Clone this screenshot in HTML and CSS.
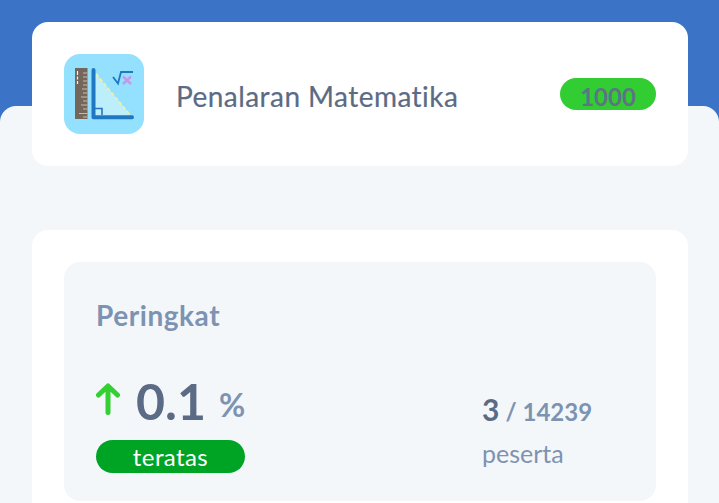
FILE: index.html
```html
<!DOCTYPE html>
<html lang="id">
<head>
<meta charset="utf-8">
<title>Penalaran Matematika</title>
<link rel="stylesheet" href="styles.css">
</head>
<body>
<div class="page">
  <header class="hero">
    <div class="card subject">
      <svg class="subject-icon" viewBox="0 0 80 80" width="80" height="80" aria-hidden="true">
        <rect width="80" height="80" rx="16" fill="#93e0ff"/>
        <rect x="11" y="14" width="12.500" height="51" fill="#75665c"/>
        <path d="M13.500 17v4M13.500 22.500v3M13.500 27v3" stroke="#f2efe9" stroke-width="1.200" fill="none"/>
        <path d="M19 19h4.500M19 23h4.500M19 27h4.500M19 31h4.500M18 35h5.500M19 39h4.500M17 43h6.500M19 47h4.500M17 51h6.500M19 55h4.500M15 59.500h8.500M19 63h4.500" stroke="#c9b9a3" stroke-width="1.200" fill="none"/>
        <path d="M31 19L66 60.500V62H31Z" fill="#bdeefb"/>
        <path d="M32 20L66 61" stroke="#e6f0b0" stroke-width="2" stroke-dasharray="4 2" fill="none"/>
        <path d="M29.500 16V63.300H68" stroke="#1f78c1" stroke-width="4" stroke-linecap="round" stroke-linejoin="round" fill="none"/>
        <path d="M31 54.500H38V61" stroke="#1f78c1" stroke-width="1.600" fill="none"/>
        <path d="M49 23l5 6.500 3-11.500H69" stroke="#1f78c1" stroke-width="1.800" fill="none"/>
        <path d="M59 22.500l8 7.500M67 22.500l-8 7.500" stroke="#c996e8" stroke-width="2.400" fill="none"/>
      </svg>
      <h1 class="subject-name">Penalaran Matematika</h1>
      <span class="score">1000</span>
    </div>
  </header>
  <main class="panel">
    <section class="card rank-card">
      <div class="rank">
        <h2 class="rank-title">Peringkat</h2>
        <div class="rank-body">
          <div class="rank-main">
            <div class="percent">
              <svg class="arrow" viewBox="0 0 24 32" width="24" height="32" aria-hidden="true">
                <path d="M12 29.500V4M2.500 12L12 3L21.500 12" stroke="#33cf33" stroke-width="5" stroke-linecap="round" stroke-linejoin="round" fill="none"/>
              </svg>
              <span class="percent-value">0.1</span>
              <span class="percent-unit">%</span>
            </div>
            <span class="badge">teratas</span>
          </div>
          <div class="rank-side">
            <div class="position"><span class="position-value">3</span> <span class="position-total">/ 14239</span></div>
            <div class="participants">peserta</div>
          </div>
        </div>
      </div>
    </section>
  </main>
</div>
</body>
</html>
```
FILE: styles.css
```css
* { box-sizing: border-box; }
html, body { margin: 0; height: 100%; overflow: hidden; }
body {
  background: #3b74c7;
  font-family: "Lato", "Noto Sans", sans-serif;
  color: #5b6b85;
}
.page { height: 503px; overflow: hidden; }
.hero { height: 106px; padding: 22px 31px 0 32px; }
.card { background: #fff; border-radius: 16px; }
.subject {
  position: relative;
  z-index: 1;
  height: 144px;
  padding: 32px;
  display: flex;
  align-items: center;
}
.subject-icon { flex: none; display: block; }
.subject-name {
  margin: 4px 0 0 32px;
  flex: 1;
  font-size: 28px;
  font-weight: 400;
  letter-spacing: 0.45px;
  color: #5b6b85;
  -webkit-text-stroke: 0.2px #5b6b85;
}
.score {
  width: 96px;
  height: 32px;
  border-radius: 16px;
  background: #32cd32;
  color: #5f7383;
  font-size: 24px;
  font-weight: 700;
  line-height: 38px;
  text-align: center;
}
.panel {
  height: 397px;
  background: #f4f7fa;
  border-radius: 16px 16px 0 0;
  padding: 124px 31px 0 32px;
}
.rank-card { padding: 32px; height: 300px; }
.rank {
  background: #f4f7fa;
  border-radius: 16px;
  height: 239px;
  padding: 32px;
}
.rank-title {
  margin: 0;
  font-size: 28px;
  line-height: 42px;
  height: 44px;
  font-weight: 700;
  letter-spacing: 0.55px;
  color: #7d93b2;
}
.rank-body { display: flex; margin-top: 37px; }
.rank-main { width: 386px; }
.percent { display: flex; align-items: center; height: 52px; }
.arrow { flex: none; margin: 0 16px 4px 0; }
.percent-value {
  font-size: 50px;
  font-weight: 700;
  line-height: 52px;
  color: #5b6b85;
}
.percent-unit {
  margin: 6px 0 0 13px;
  font-size: 32px;
  font-weight: 700;
  color: #7d93b2;
}
.badge {
  display: block;
  width: 149px;
  height: 33px;
  margin-top: 13px;
  border-radius: 17px;
  background: #00a424;
  color: #fff;
  font-size: 24px;
  letter-spacing: 0.4px;
  line-height: 34px;
  text-align: center;
}
.position { height: 53px; padding-top: 12px; line-height: 44px; white-space: nowrap; }
.position-value { font-size: 30px; font-weight: 700; color: #5b6b85; }
.position-total { font-size: 24px; font-weight: 700; color: #7d93b2; margin-left: 2px; }
.participants {
  margin-top: 9px;
  font-size: 25px;
  line-height: 32px;
  color: #7d93b2;
}
```
